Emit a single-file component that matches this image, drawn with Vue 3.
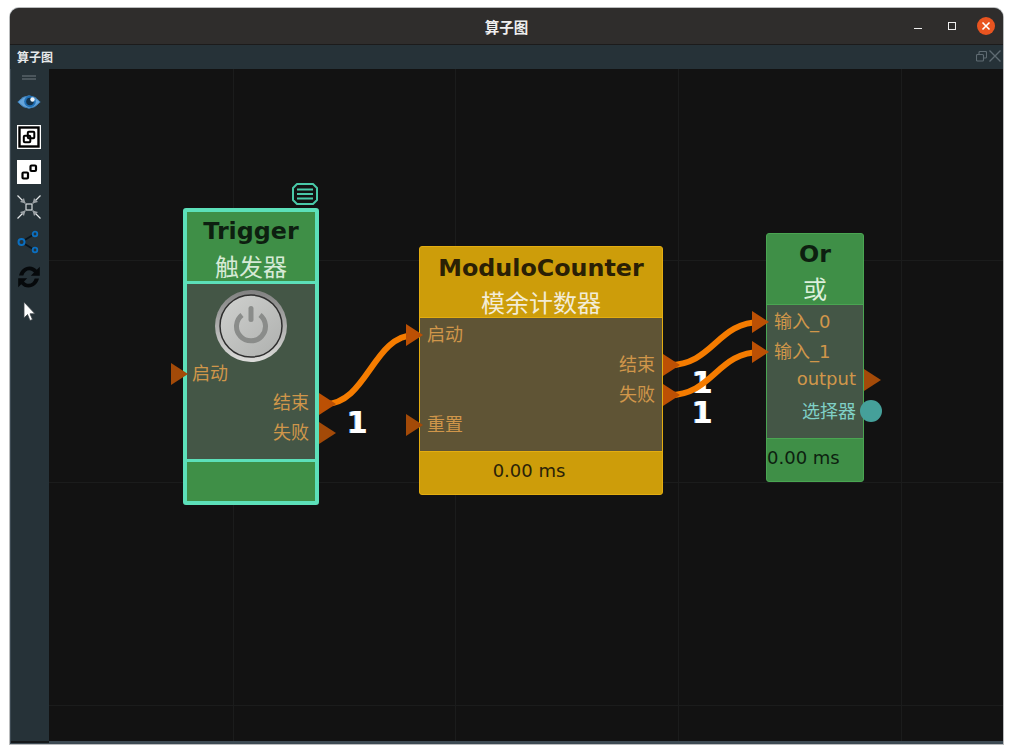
<script setup>
// node data, coordinates are relative to the canvas (canvas origin is 49,69 on the page)
const gridX = [184, 406, 629, 852];
const gridY = [191, 413, 636];

const trigger = {
  inputs: [{ label: "启动", top: 78 }],
  outputs: [
    { label: "结束", top: 107 },
    { label: "失败", top: 137 },
  ],
};
const modulo = {
  inputs: [
    { label: "启动", top: 5 },
    { label: "重置", top: 95 },
  ],
  outputs: [
    { label: "结束", top: 35 },
    { label: "失败", top: 65 },
  ],
};
const orNode = {
  inputs: [
    { label: "输入_0", top: 5 },
    { label: "输入_1", top: 35 },
  ],
  outputs: [{ label: "output", top: 62 }],
};

const ports = [
  // x, y of the left edge middle, connected or not
  { x: 122, y: 305, on: false },
  { x: 270, y: 335, on: true },
  { x: 270, y: 364, on: false },
  { x: 357, y: 266, on: true },
  { x: 357, y: 356, on: false },
  { x: 614, y: 296, on: true },
  { x: 614, y: 326, on: true },
  { x: 703, y: 253, on: true },
  { x: 703, y: 283, on: true },
  { x: 815, y: 311, on: false },
];

const wires = [
  "M276 335 C318 335 324 266 366 266",
  "M620 296 C664 296 668 253 712 253",
  "M620 326 C664 326 668 283 712 283",
];

const counts = [
  { x: 298, y: 341 },
  { x: 643, y: 301 },
  { x: 643, y: 331 },
];

const triangle = (p) => `${p.x},${p.y - 11} ${p.x + 17},${p.y} ${p.x},${p.y + 11}`;
</script>

<template>
  <div class="page">
    <div class="window">
      <header class="titlebar">
        <span class="title">算子图</span>
        <div class="controls">
          <svg class="minimize" width="12" height="12" viewBox="0 0 12 12"><path d="M2 8.500H10" stroke="#eee" stroke-width="1" /></svg>
          <svg width="12" height="12" viewBox="0 0 12 12"><rect x="2.500" y="2.500" width="7" height="7" fill="none" stroke="#eee" stroke-width="1" /></svg>
          <span class="close">
            <svg width="10" height="10" viewBox="0 0 10 10"><path d="M1.500 1.500L8.500 8.500M8.500 1.500L1.500 8.500" stroke="#fff" stroke-width="1.600" /></svg>
          </span>
        </div>
      </header>

      <div class="dock-title">
        <span>算子图</span>
        <div class="dock-btns">
          <svg width="11" height="11" viewBox="0 0 11 11" fill="none" stroke="#5f6b72" stroke-width="1.100">
            <rect x="0.500" y="3.500" width="7" height="6.500" rx="1" />
            <path d="M3 3V1.500Q3 .5 4 .5H9.500Q10.500 .5 10.500 1.500V6Q10.500 7 9.500 7H8" />
          </svg>
          <svg width="12" height="12" viewBox="0 0 12 12"><path d="M.5 .5L11.500 11.500M11.500 .5L.5 11.500" stroke="#5f6b72" stroke-width="1.400" /></svg>
        </div>
      </div>

      <div class="dock-body">
        <aside class="toolbar">
          <div class="grip"></div>
          <div class="tool">
            <svg width="24" height="24" viewBox="0 0 24 24">
              <path d="M.8 12Q12 -.5 23.200 12Q12 24.500 .8 12Z" fill="#66a6dd" stroke="#3f7fb5" />
              <circle cx="13" cy="11.500" r="5.800" fill="#1f6fb5" />
              <circle cx="13" cy="11.500" r="3.800" fill="#14324a" />
              <circle cx="15.500" cy="9.500" r="2.200" fill="#eef5fb" />
            </svg>
          </div>
          <div class="tool">
            <svg width="24" height="24" viewBox="0 0 24 24">
              <rect width="24" height="24" fill="#fff" />
              <rect x="2.500" y="2.500" width="19" height="19" fill="none" stroke="#000" stroke-width="2.400" />
              <rect x="10.800" y="6.800" width="6.500" height="6.500" rx="1" fill="#fff" stroke="#000" stroke-width="2" />
              <rect x="6.800" y="10.800" width="6.500" height="6.500" rx="1" fill="none" stroke="#000" stroke-width="2" />
            </svg>
          </div>
          <div class="tool">
            <svg width="24" height="24" viewBox="0 0 24 24">
              <rect width="24" height="24" fill="#fff" />
              <rect x="5.500" y="12.500" width="5.500" height="6" rx="1" fill="none" stroke="#000" stroke-width="2.200" />
              <rect x="13.500" y="5.500" width="5.500" height="5.500" rx="1" fill="none" stroke="#000" stroke-width="2.200" />
            </svg>
          </div>
          <div class="tool">
            <svg width="24" height="24" viewBox="0 0 24 24" fill="none">
              <rect x="9" y="9" width="6" height="6" stroke="#d5dadc" stroke-width="1.200" />
              <path d="M.5 .5L8 8M23.500 .5L16 8M.5 23.500L8 16M23.500 23.500L16 16" stroke="#e2e6e8" stroke-width="1.200" />
              <path d="M8.500 8.500L3 7L7 3ZM15.500 8.500L21 7L17 3ZM8.500 15.500L3 17L7 21ZM15.500 15.500L21 17L17 21Z" fill="#9aa0a4" />
            </svg>
          </div>
          <div class="tool">
            <svg width="24" height="24" viewBox="0 0 24 24" fill="none" stroke="#0b6fc0">
              <path d="M6 11L16 5M6 13L16 19" stroke="#0a151d" stroke-width="1.800" />
              <circle cx="4.500" cy="12" r="3" stroke-width="2" />
              <circle cx="18" cy="4" r="2.300" stroke-width="1.800" />
              <circle cx="18" cy="20" r="2.300" stroke-width="1.800" />
            </svg>
          </div>
          <div class="tool">
            <svg width="24" height="24" viewBox="0 0 24 24" fill="#06090b">
              <path d="M2 10.500C3.500 5 7.500 1.500 12.500 1.500C15.500 1.500 18 2.800 19.800 4.800L22.800 1.800V10.800H13.800L17 7.600C15.800 6.200 14.300 5.200 12.300 5.200C9.500 5.200 7.300 7.200 6.300 10.500Z" />
              <path d="M22 13.500C20.500 19 16.500 22.500 11.500 22.500C8.500 22.500 6 21.200 4.200 19.200L1.200 22.200V13.200H10.200L7 16.400C8.200 17.800 9.700 18.800 11.700 18.800C14.500 18.800 16.700 16.800 17.700 13.500Z" />
            </svg>
          </div>
          <div class="tool">
            <svg width="24" height="24" viewBox="0 0 24 24">
              <path d="M7 2V18L10.500 14.500L13 20.500L15.500 19.500L13 13.800H18Z" fill="#fff" stroke="#3a4146" stroke-width=".8" />
            </svg>
          </div>
        </aside>

        <main class="canvas">
          <i v-for="x in gridX" :key="'x' + x" class="grid-v" :style="{ left: x + 'px' }"></i>
          <i v-for="y in gridY" :key="'y' + y" class="grid-h" :style="{ top: y + 'px' }"></i>

          <!-- Trigger -->
          <section class="node trigger">
            <div class="head">
              <h2>Trigger</h2>
              <p>触发器</p>
            </div>
            <div class="body">
              <svg class="power" width="74" height="74" viewBox="0 0 74 74">
                <defs>
                  <linearGradient id="ring" x1="0" y1="0" x2="0" y2="1">
                    <stop offset="0" stop-color="#808080" />
                    <stop offset="1" stop-color="#dcdcda" />
                  </linearGradient>
                  <linearGradient id="face" x1="0" y1="0" x2="1" y2="1">
                    <stop offset="0" stop-color="#d0d1cf" />
                    <stop offset="1" stop-color="#aeb0ae" />
                  </linearGradient>
                </defs>
                <circle cx="37" cy="37" r="36" fill="url(#ring)" />
                <circle cx="37" cy="37" r="31" fill="url(#face)" stroke="#2e2e2e" stroke-width="1.500" />
                <path d="M28 26A14.500 14.500 0 1 0 46 26" fill="none" stroke="#8a8c8a" stroke-width="5" />
                <path d="M37 19.500V30.500" stroke="#8a8c8a" stroke-width="5" stroke-linecap="round" />
              </svg>
              <span v-for="p in trigger.inputs" :key="p.label" class="port in" :style="{ top: p.top + 'px' }">{{ p.label }}</span>
              <span v-for="p in trigger.outputs" :key="p.label" class="port out" :style="{ top: p.top + 'px' }">{{ p.label }}</span>
            </div>
            <div class="foot"></div>
            <svg class="menu-badge" width="26" height="22" viewBox="0 0 26 22" fill="none" stroke="#49c9a8">
              <path d="M5 1H21L25 5V17L21 21H5L1 17V5Z" stroke-width="2" stroke-linejoin="round" />
              <path d="M5 6.500H21M5 11H21M5 15.500H21" stroke-width="1.800" />
            </svg>
          </section>

          <!-- ModuloCounter -->
          <section class="node modulo">
            <div class="head">
              <h2>ModuloCounter</h2>
              <p>模余计数器</p>
            </div>
            <div class="body">
              <span v-for="p in modulo.inputs" :key="p.label" class="port in" :style="{ top: p.top + 'px' }">{{ p.label }}</span>
              <span v-for="p in modulo.outputs" :key="p.label" class="port out" :style="{ top: p.top + 'px' }">{{ p.label }}</span>
            </div>
            <div class="foot">0.00 ms</div>
          </section>

          <!-- Or -->
          <section class="node or">
            <div class="head">
              <h2>Or</h2>
              <p>或</p>
            </div>
            <div class="body">
              <span v-for="p in orNode.inputs" :key="p.label" class="port in" :style="{ top: p.top + 'px' }">{{ p.label }}</span>
              <span v-for="p in orNode.outputs" :key="p.label" class="port out" :style="{ top: p.top + 'px' }">{{ p.label }}</span>
              <span class="port out selector">选择器</span>
            </div>
            <div class="foot">0.00 ms</div>
          </section>

          <span v-for="c in counts" :key="c.y" class="count" :style="{ left: c.x + 'px', top: c.y + 'px' }">1</span>

          <svg class="links" width="954" height="672" viewBox="0 0 954 672">
            <path v-for="d in wires" :key="d" :d="d" fill="none" stroke="#f57c00" stroke-width="6" />
            <polygon v-for="p in ports" :key="p.x + '-' + p.y" :points="triangle(p)" :fill="p.on ? '#bc5004' : '#a34a08'" />
            <circle cx="822" cy="342" r="11" fill="#45a09a" />
          </svg>
        </main>
      </div>
    </div>
  </div>
</template>

<style>
html,
body {
  margin: 0;
  background: #fff;
}
</style>

<style scoped>
.page {
  width: 1014px;
  height: 754px;
  padding: 8px 10px 10px;
  box-sizing: border-box;
  background: #fff;
  overflow: hidden;
  font-family: "DejaVu Sans", "Noto Sans CJK SC", sans-serif;
}

.window {
  width: 993px;
  height: 736px;
  display: flex;
  flex-direction: column;
  background: #3d4a53;
  border-radius: 9px 9px 0 0;
  box-shadow: 0 0 0 1px #b9bbbc;
  overflow: hidden;
}

.titlebar {
  height: 36px;
  flex: none;
  display: flex;
  align-items: center;
  justify-content: center;
  position: relative;
  background: #2f2d2c;
  border-bottom: 1px solid #1c1b1b;
}

.title {
  font-size: 14.500px;
  font-weight: 700;
  color: #eee;
  padding-top: 1px;
  font-family: "Noto Sans CJK SC", sans-serif;
}

.controls {
  position: absolute;
  right: 8px;
  top: 9px;
  display: flex;
  align-items: center;
  gap: 19px;
}

.minimize {
  margin-right: 3px;
}

.close {
  width: 18px;
  height: 18px;
  border-radius: 50%;
  background: #e95420;
  display: flex;
  align-items: center;
  justify-content: center;
}

.dock-title {
  height: 24px;
  flex: none;
  display: flex;
  align-items: center;
  justify-content: space-between;
  padding: 0 2px 2px 7px;
  box-sizing: border-box;
  background: #263238;
  color: #e6e9ea;
  font-size: 12px;
  font-weight: 700;
  font-family: "Noto Sans CJK SC", sans-serif;
}

.dock-btns {
  display: flex;
  align-items: center;
  gap: 2px;
}

.dock-body {
  flex: 1;
  display: flex;
  min-height: 0;
  padding-left: 1px;
  padding-bottom: 3px;
}

.toolbar {
  width: 38px;
  flex: none;
  display: flex;
  flex-direction: column;
  align-items: center;
  background: #263238;
  padding: 6px 2px 0 0;
  box-sizing: border-box;
  margin-bottom: -2px;
  border-bottom: 2px solid #15191b;
}

.grip {
  width: 14px;
  height: 1px;
  margin-bottom: 10px;
  border-top: 2px solid #4b565c;
  border-bottom: 2px solid #4b565c;
}

.tool {
  width: 24px;
  height: 24px;
  margin-bottom: 11px;
}

.tool svg {
  display: block;
}

.canvas {
  flex: 1;
  position: relative;
  background: #121212;
  overflow: hidden;
}

.grid-v,
.grid-h {
  position: absolute;
  background: #1b1c1c;
}

.grid-v {
  top: 0;
  bottom: 0;
  width: 1px;
}

.grid-h {
  left: 0;
  right: 0;
  height: 1px;
}

.node {
  position: absolute;
  box-sizing: border-box;
  display: flex;
  flex-direction: column;
  border-radius: 3px;
}

.head {
  flex: none;
  text-align: center;
  box-sizing: border-box;
}

.head h2 {
  margin: 0;
  font-size: 23.800px;
  line-height: 30px;
  font-weight: 700;
  font-family: "DejaVu Sans", sans-serif;
}

.head p {
  margin: 0;
  font-size: 24px;
  line-height: 38px;
  font-family: "Noto Sans CJK SC", sans-serif;
}

.body {
  flex: none;
  position: relative;
  box-sizing: border-box;
}

.foot {
  flex: 1;
  font-size: 18px;
  color: #2a2208;
}

.port {
  position: absolute;
  font-size: 18px;
  line-height: 24px;
  color: #d0964a;
  white-space: nowrap;
  font-family: "DejaVu Sans", "Noto Sans CJK SC", sans-serif;
}

.port.in {
  left: 7px;
}

.port.out {
  right: 7px;
}

/* Trigger */
.trigger {
  left: 134px;
  top: 139px;
  width: 136px;
  height: 297px;
  background: #3f8f47;
  border: 4px solid #5ce0b9;
}

.trigger .head {
  height: 69px;
  padding-top: 4px;
}

.trigger .head h2 {
  color: #0d1f10;
}

.trigger .head p {
  color: #d6ead6;
  line-height: 40px;
}

.trigger .body {
  height: 181px;
  background: #445646;
  border-top: 3px solid #5ce0b9;
  border-bottom: 3px solid #5ce0b9;
}

.trigger .port.in {
  left: 5px;
}

.trigger .port.out {
  right: 6px;
}

.power {
  position: absolute;
  left: 27px;
  top: 5px;
}

.menu-badge {
  position: absolute;
  right: -3px;
  top: -29px;
}

/* ModuloCounter */
.modulo {
  left: 370px;
  top: 177px;
  width: 244px;
  height: 249px;
  background: #cd9d0a;
  border: 1px solid #e4ad10;
}

.modulo .head {
  height: 70px;
  padding-top: 6px;
}

.modulo .head h2 {
  color: #2a2005;
}

.modulo .head p {
  color: #f3ecd6;
}

.modulo .body {
  height: 135px;
  background: #5f5435;
  border-top: 1px solid #e4ad10;
  border-bottom: 1px solid #e4ad10;
}

.modulo .foot {
  text-align: center;
  padding: 8px 24px 0 0;
}

/* Or */
.or {
  left: 717px;
  top: 164px;
  width: 98px;
  height: 249px;
  background: #3f8f47;
  border: 1px solid #4aa552;
}

.or .head {
  height: 70px;
  padding-top: 5px;
}

.or .head h2 {
  color: #0d1f10;
}

.or .head p {
  color: #dcefdc;
}

.or .body {
  height: 135px;
  background: #445646;
  border-top: 1px solid #4aa552;
  border-bottom: 1px solid #4aa552;
}

.or .foot {
  padding-top: 8px;
  color: #0d1f10;
}

.port.selector {
  top: 95px;
  color: #7fd0c6;
}

.count {
  position: absolute;
  font-size: 30px;
  line-height: 26px;
  font-weight: 700;
  color: #fff;
  font-family: "DejaVu Sans", sans-serif;
  text-shadow: -1px 0 0 #9cc4f0;
}

.links {
  position: absolute;
  left: 0;
  top: 0;
  pointer-events: none;
}
</style>
